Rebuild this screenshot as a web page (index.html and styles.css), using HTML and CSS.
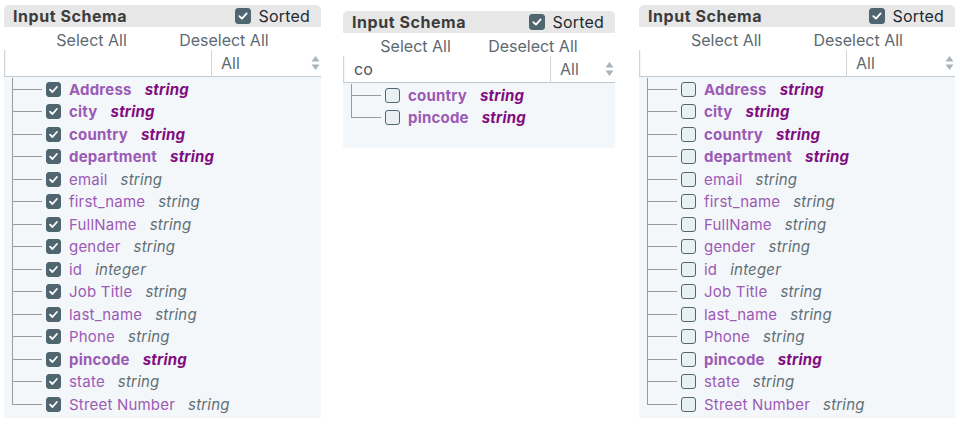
FILE: index.html
```html
<!DOCTYPE html>
<html lang="en">
<head>
<meta charset="utf-8">
<title>Input Schema</title>
<link rel="stylesheet" href="styles.css">
</head>
<body>
<div class="page">

  <section class="panel panel-left">
    <header class="panel-head">
      <span class="title">Input Schema</span>
      <span class="sorted"><span class="cb cb-on cb-lg"><svg viewBox="0 0 16 16"><path d="M3.8 8.2 L6.8 11 L12.2 5"/></svg></span>Sorted</span>
    </header>
    <div class="actions"><span>Select All</span><span>Deselect All</span></div>
    <div class="filter"><div class="search"></div><div class="select"><span>All</span><svg class="updown" viewBox="0 0 9 16"><path d="M4.5 1 L8.5 6.5 L0.5 6.5 Z"/><path d="M4.5 15 L8.5 9.5 L0.5 9.5 Z"/></svg></div></div>
    <ul class="tree">
      <li class="row key"><span class="branch"></span><span class="cb cb-on"><svg viewBox="0 0 15 15"><path d="M3.5 7.7 L6.3 10.4 L11.4 4.6"/></svg></span><span class="name">Address</span><span class="type">string</span></li>
      <li class="row key"><span class="branch"></span><span class="cb cb-on"><svg viewBox="0 0 15 15"><path d="M3.5 7.7 L6.3 10.4 L11.4 4.6"/></svg></span><span class="name">city</span><span class="type">string</span></li>
      <li class="row key"><span class="branch"></span><span class="cb cb-on"><svg viewBox="0 0 15 15"><path d="M3.5 7.7 L6.3 10.4 L11.4 4.6"/></svg></span><span class="name">country</span><span class="type">string</span></li>
      <li class="row key"><span class="branch"></span><span class="cb cb-on"><svg viewBox="0 0 15 15"><path d="M3.5 7.7 L6.3 10.4 L11.4 4.6"/></svg></span><span class="name">department</span><span class="type">string</span></li>
      <li class="row"><span class="branch"></span><span class="cb cb-on"><svg viewBox="0 0 15 15"><path d="M3.5 7.7 L6.3 10.4 L11.4 4.6"/></svg></span><span class="name">email</span><span class="type">string</span></li>
      <li class="row"><span class="branch"></span><span class="cb cb-on"><svg viewBox="0 0 15 15"><path d="M3.5 7.7 L6.3 10.4 L11.4 4.6"/></svg></span><span class="name">first_name</span><span class="type">string</span></li>
      <li class="row"><span class="branch"></span><span class="cb cb-on"><svg viewBox="0 0 15 15"><path d="M3.5 7.7 L6.3 10.4 L11.4 4.6"/></svg></span><span class="name">FullName</span><span class="type">string</span></li>
      <li class="row"><span class="branch"></span><span class="cb cb-on"><svg viewBox="0 0 15 15"><path d="M3.5 7.7 L6.3 10.4 L11.4 4.6"/></svg></span><span class="name">gender</span><span class="type">string</span></li>
      <li class="row"><span class="branch"></span><span class="cb cb-on"><svg viewBox="0 0 15 15"><path d="M3.5 7.7 L6.3 10.4 L11.4 4.6"/></svg></span><span class="name">id</span><span class="type">integer</span></li>
      <li class="row"><span class="branch"></span><span class="cb cb-on"><svg viewBox="0 0 15 15"><path d="M3.5 7.7 L6.3 10.4 L11.4 4.6"/></svg></span><span class="name">Job Title</span><span class="type">string</span></li>
      <li class="row"><span class="branch"></span><span class="cb cb-on"><svg viewBox="0 0 15 15"><path d="M3.5 7.7 L6.3 10.4 L11.4 4.6"/></svg></span><span class="name">last_name</span><span class="type">string</span></li>
      <li class="row"><span class="branch"></span><span class="cb cb-on"><svg viewBox="0 0 15 15"><path d="M3.5 7.7 L6.3 10.4 L11.4 4.6"/></svg></span><span class="name">Phone</span><span class="type">string</span></li>
      <li class="row key"><span class="branch"></span><span class="cb cb-on"><svg viewBox="0 0 15 15"><path d="M3.5 7.7 L6.3 10.4 L11.4 4.6"/></svg></span><span class="name">pincode</span><span class="type">string</span></li>
      <li class="row"><span class="branch"></span><span class="cb cb-on"><svg viewBox="0 0 15 15"><path d="M3.5 7.7 L6.3 10.4 L11.4 4.6"/></svg></span><span class="name">state</span><span class="type">string</span></li>
      <li class="row"><span class="branch"></span><span class="cb cb-on"><svg viewBox="0 0 15 15"><path d="M3.5 7.7 L6.3 10.4 L11.4 4.6"/></svg></span><span class="name">Street Number</span><span class="type">string</span></li>
    </ul>
  </section>

  <section class="panel panel-mid">
    <header class="panel-head">
      <span class="title">Input Schema</span>
      <span class="sorted"><span class="cb cb-on cb-lg"><svg viewBox="0 0 16 16"><path d="M3.8 8.2 L6.8 11 L12.2 5"/></svg></span>Sorted</span>
    </header>
    <div class="actions"><span>Select All</span><span>Deselect All</span></div>
    <div class="filter"><div class="search">co</div><div class="select"><span>All</span><svg class="updown" viewBox="0 0 9 16"><path d="M4.5 1 L8.5 6.5 L0.5 6.5 Z"/><path d="M4.5 15 L8.5 9.5 L0.5 9.5 Z"/></svg></div></div>
    <ul class="tree tree-short">
      <li class="row key"><span class="branch"></span><span class="cb"></span><span class="name">country</span><span class="type">string</span></li>
      <li class="row key"><span class="branch"></span><span class="cb"></span><span class="name">pincode</span><span class="type">string</span></li>
    </ul>
  </section>

  <section class="panel panel-right">
    <header class="panel-head">
      <span class="title">Input Schema</span>
      <span class="sorted"><span class="cb cb-on cb-lg"><svg viewBox="0 0 16 16"><path d="M3.8 8.2 L6.8 11 L12.2 5"/></svg></span>Sorted</span>
    </header>
    <div class="actions"><span>Select All</span><span>Deselect All</span></div>
    <div class="filter"><div class="search"></div><div class="select"><span>All</span><svg class="updown" viewBox="0 0 9 16"><path d="M4.5 1 L8.5 6.5 L0.5 6.5 Z"/><path d="M4.5 15 L8.5 9.5 L0.5 9.5 Z"/></svg></div></div>
    <ul class="tree">
      <li class="row key"><span class="branch"></span><span class="cb"></span><span class="name">Address</span><span class="type">string</span></li>
      <li class="row key"><span class="branch"></span><span class="cb"></span><span class="name">city</span><span class="type">string</span></li>
      <li class="row key"><span class="branch"></span><span class="cb"></span><span class="name">country</span><span class="type">string</span></li>
      <li class="row key"><span class="branch"></span><span class="cb"></span><span class="name">department</span><span class="type">string</span></li>
      <li class="row"><span class="branch"></span><span class="cb"></span><span class="name">email</span><span class="type">string</span></li>
      <li class="row"><span class="branch"></span><span class="cb"></span><span class="name">first_name</span><span class="type">string</span></li>
      <li class="row"><span class="branch"></span><span class="cb"></span><span class="name">FullName</span><span class="type">string</span></li>
      <li class="row"><span class="branch"></span><span class="cb"></span><span class="name">gender</span><span class="type">string</span></li>
      <li class="row"><span class="branch"></span><span class="cb"></span><span class="name">id</span><span class="type">integer</span></li>
      <li class="row"><span class="branch"></span><span class="cb"></span><span class="name">Job Title</span><span class="type">string</span></li>
      <li class="row"><span class="branch"></span><span class="cb"></span><span class="name">last_name</span><span class="type">string</span></li>
      <li class="row"><span class="branch"></span><span class="cb"></span><span class="name">Phone</span><span class="type">string</span></li>
      <li class="row key"><span class="branch"></span><span class="cb"></span><span class="name">pincode</span><span class="type">string</span></li>
      <li class="row"><span class="branch"></span><span class="cb"></span><span class="name">state</span><span class="type">string</span></li>
      <li class="row"><span class="branch"></span><span class="cb"></span><span class="name">Street Number</span><span class="type">string</span></li>
    </ul>
  </section>

</div>
</body>
</html>
```

FILE: styles.css
```css
* { box-sizing: border-box; }

body {
  margin: 0;
  background: #ffffff;
  font-family: Inter, "Noto Sans", "DejaVu Sans", sans-serif;
}

.page {
  display: flex;
  align-items: flex-start;
  padding: 5px 0 0 4px;
}

.panel { display: flex; flex-direction: column; }
.panel-left { width: 317px; }
.panel-mid { width: 272px; margin-left: 22px; margin-top: 6px; }
.panel-right { width: 316px; margin-left: 24px; }

.panel-head {
  height: 22px;
  background: #e7e7e7;
  border-radius: 5px 5px 0 0;
  display: flex;
  align-items: center;
  justify-content: space-between;
  padding: 0 11px 0 9px;
}

.title {
  font-size: 16px;
  font-weight: 700;
  color: #3c3c3c;
  letter-spacing: 0.55px;
}

.sorted {
  display: flex;
  align-items: center;
  gap: 7px;
  font-size: 16px;
  letter-spacing: 0.2px;
  color: #222a30;
}

.actions {
  height: 23px;
  display: flex;
  justify-content: space-evenly;
  align-items: center;
  padding-top: 3px;
  font-size: 16px;
  line-height: 20px;
  color: #5d6971;
}

.filter {
  display: flex;
  height: 27px;
}

.search {
  width: 207px;
  flex: none;
  background: #fff;
  border-left: 1px solid #cfd4d8;
  border-bottom: 1px solid #c4c9cd;
  box-shadow: inset 1px 0 1px rgba(0,0,0,0.04);
  padding-left: 10px;
  display: flex;
  align-items: center;
  font-size: 16px;
  color: #4a555c;
}

.select {
  flex: 1;
  background: #fff;
  border-left: 1px solid #cfd4d8;
  border-bottom: 1px solid #c4c9cd;
  display: flex;
  align-items: center;
  justify-content: space-between;
  padding: 0 1px 0 9px;
  font-size: 16px;
  color: #5d6971;
}

.updown { width: 9px; height: 16px; fill: #aab4ba; }

.tree {
  list-style: none;
  margin: 0;
  padding: 1px 0 2px 8px;
  background: #f4f7f9;
}
.tree-short { padding-bottom: 19px; }

.row {
  height: 22.5px;
  display: flex;
  align-items: center;
  border-left: 1px solid #9a9a9a;
  font-size: 15px;
  letter-spacing: 0.2px;
  white-space: nowrap;
}
.row:last-child { border-left: none; }

.branch {
  align-self: flex-start;
  width: 29px;
  height: 11.5px;
  border-bottom: 1px solid #9a9a9a;
  flex: none;
}
.row:last-child .branch { border-left: 1px solid #9a9a9a; width: 30px; }

.cb {
  width: 15px;
  height: 15px;
  flex: none;
  border-radius: 3px;
  border: 1.5px solid #4f6570;
  background: #e8f0f4;
  margin-left: 4px;
  display: flex;
  align-items: center;
  justify-content: center;
}
.cb svg { width: 15px; height: 15px; fill: none; stroke: #ffffff; stroke-width: 2.1; stroke-linecap: round; stroke-linejoin: round; }
.cb-on { background: #4f6570; border-color: #4f6570; }
.cb-lg { width: 16px; height: 16px; margin-left: 0; }
.cb-lg svg { width: 16px; height: 16px; }

.name {
  margin-left: 8px;
  color: #9b5ab5;
}
.type {
  margin-left: 13px;
  font-style: italic;
  color: #5f6f77;
}
.key .name { font-weight: 700; }
.key .type { font-weight: 700; color: #800d80; }
```
